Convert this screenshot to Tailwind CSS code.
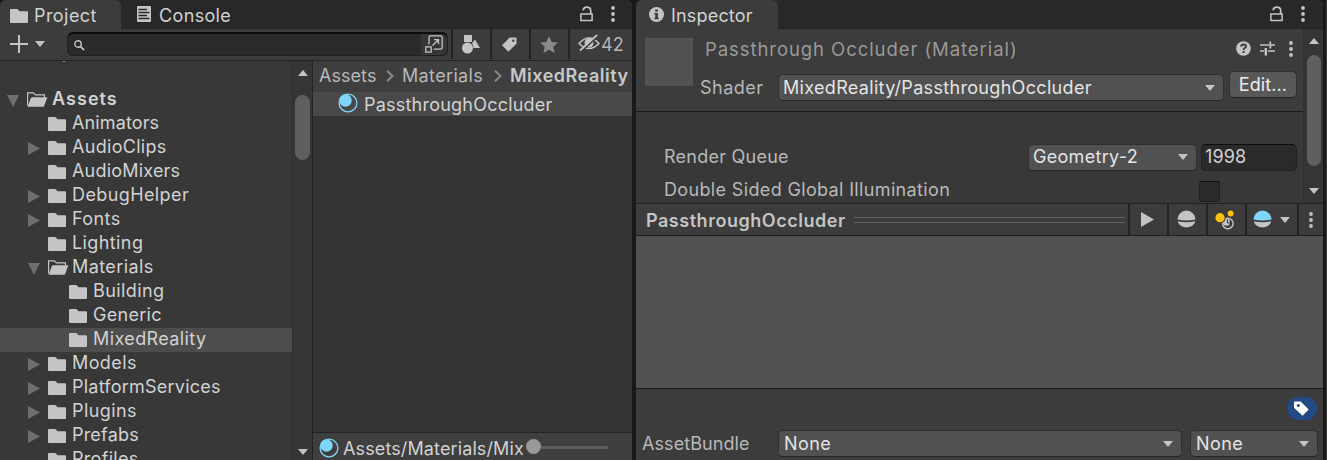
<!DOCTYPE html>
<html lang="en">
<head>
<meta charset="utf-8">
<title>Project and Inspector</title>
<script src="https://cdn.jsdelivr.net/npm/@tailwindcss/browser@4"></script>
</head>
<body class="w-[1327px] h-[460px] overflow-hidden bg-[#191919] font-['Inter',sans-serif] text-[18px] leading-6 tracking-[0.4px] text-[#d2d2d2]">
<svg class="hidden">
  <symbol id="folder" viewBox="0 0 18 14"><path d="M0 1Q0 0 1 0H7.5L9.5 2.2H17Q18 2.2 18 3.2V13Q18 14 17 14H1Q0 14 0 13Z" fill="#c4c4c4"/></symbol>
  <symbol id="open" viewBox="0 0 21 15"><path d="M.6 13.5V.9H6.3L8.4 2.9H17.4V5.5" fill="none" stroke="#c4c4c4" stroke-width="1.2"/><path d="M5.2 5.2H20.4L17 14.2Q16.700 14.700 16 14.700H.6L3.900 6Q4.200 5.200 5.200 5.200Z" fill="#c4c4c4"/></symbol>
  <symbol id="right" viewBox="0 0 12 13"><path d="M0 0L12 6.500L0 13Z" fill="#6e6e6e"/></symbol>
  <symbol id="down" viewBox="0 0 12 12"><path d="M0 0H12L6 12Z" fill="#6e6e6e"/></symbol>
  <symbol id="caret" viewBox="0 0 10 6"><path d="M0 0H10L5 6Z" fill="#c4c4c4"/></symbol>
  <symbol id="caretup" viewBox="0 0 10 6"><path d="M0 6H10L5 0Z" fill="#c4c4c4"/></symbol>
  <symbol id="lock" viewBox="0 0 13 16"><path d="M.9 8H12.1V14.500H.9Z" fill="none" stroke="#c4c4c4" stroke-width="1.500"/><path d="M3 4.300Q3.600 1.100 6.600 1.100Q10.700 1.100 10.700 4.500V8" fill="none" stroke="#c4c4c4" stroke-width="1.700"/></symbol>
  <symbol id="dots" viewBox="0 0 4 16"><g fill="#c4c4c4"><circle cx="2" cy="2" r="1.900"/><circle cx="2" cy="8" r="1.900"/><circle cx="2" cy="14" r="1.900"/></g></symbol>
  <symbol id="mat" viewBox="0 0 20 20"><circle cx="10" cy="10" r="8.900" fill="none" stroke="#7fd6fd" stroke-width="1.300"/><circle cx="7.500" cy="7.500" r="6.200" fill="#7fd6fd"/></symbol>
</svg>
<div class="flex h-[460px] w-[1327px]">

  <!-- Project panel -->
  <section class="flex h-full w-[632px] shrink-0 flex-col rounded-t-md bg-[#383838] overflow-hidden">
    <header class="flex h-[29px] shrink-0 bg-[#282828]">
      <div class="flex w-[121px] items-center rounded-t-md bg-[#3c3c3c] pl-[10px] pt-[2px]">
        <svg class="h-[14px] w-[18px]"><use href="#folder"/></svg>
        <span class="ml-[6px] tracking-[0.450px]">Project</span>
      </div>
      <div class="flex flex-1 items-center border-b border-[#232323] pl-4">
        <svg class="h-4 w-[14px]" viewBox="0 0 14 16"><rect width="14" height="16" rx="1" fill="#c4c4c4"/><path d="M1.500 3.500H10M1.500 6.500H12.500M1.500 9.500H10M1.500 12.500H12.500" stroke="#282828" stroke-width="1.300"/></svg>
        <span class="ml-2 mt-[3px] tracking-[0.350px]">Console</span>
        <svg class="ml-auto h-4 w-[13px]"><use href="#lock"/></svg>
        <svg class="ml-[18px] mr-[17px] h-4 w-1"><use href="#dots"/></svg>
      </div>
    </header>
    <div class="flex h-8 shrink-0 border-b border-[#232323] bg-[#3c3c3c]">
      <svg class="ml-[10px] mt-[6px] h-[18px] w-[18px]" viewBox="0 0 18 18"><path d="M9 0V18M0 9H18" stroke="#c4c4c4" stroke-width="2"/></svg>
      <svg class="ml-[7px] mt-3 h-[6px] w-[10px]"><use href="#caret"/></svg>
      <div class="ml-[22px] mt-[3px] flex h-6 w-[381px] rounded-md border border-t-2 border-[#212121] border-t-[#0d0d0d] bg-[#2a2a2a]">
        <svg class="ml-[6px] mt-[6px] h-[11px] w-[11px]" viewBox="0 0 11 11"><circle cx="4" cy="4" r="3.200" fill="none" stroke="#c4c4c4" stroke-width="1.400"/><path d="M6.300 6.300L10.200 10.200" stroke="#c4c4c4" stroke-width="1.700"/></svg>
        <div class="ml-auto flex w-[26px] justify-center rounded-r-md bg-[#363636] pt-px">
          <svg class="h-[18px] w-[18px]" viewBox="0 0 18 18" fill="none" stroke="#c4c4c4" stroke-width="1.300"><path d="M4 9.500V2.500Q4 .8 5.700 .8H15.500Q17.200 .8 17.200 2.500V12.500Q17.200 14.200 15.500 14.200H8.500M.8 11.800H6.200V17.200H.8ZM7.500 10.500L13.300 4.800M9 4.600H13.500V9.200"/></svg>
        </div>
      </div>
      <div class="ml-[3px] flex h-[30px] flex-1">
        <div class="flex w-[39px] items-center justify-center border-l-2 border-[#232323] pr-[2px]">
          <svg class="h-[19px] w-[18px]" viewBox="0 0 18 19" fill="#c4c4c4"><rect x="2" width="8" height="7"/><circle cx="5.500" cy="13" r="5.500"/><path d="M13 4.500L18 13H11.500Q11.300 9.500 9.800 8.300Z"/></svg>
        </div>
        <div class="flex w-[39px] items-center justify-center border-l-2 border-[#232323] pr-[2px]">
          <svg class="h-[15px] w-[15px]" viewBox="0 0 15 15"><path d="M7.700 .5H13.500Q14.500 .5 14.500 1.500V6.800L6.300 14.800L0 8.300Z" fill="#c4c4c4"/><circle cx="11.300" cy="3.800" r="1.200" fill="#3c3c3c"/></svg>
        </div>
        <div class="flex w-[39px] items-center justify-center border-l-2 border-[#232323] pr-[2px]">
          <svg class="h-[17px] w-[18px]" viewBox="0 0 18 17"><path d="M9 0L11.600 5.900L18 6.500L13.200 10.800L14.600 17L9 13.700L3.400 17L4.800 10.800L0 6.500L6.400 5.900Z" fill="#8a8a8a"/></svg>
        </div>
        <div class="flex flex-1 items-center border-l-2 border-[#232323] pl-2">
          <svg class="-mt-[2px] h-[18px] w-[22px] shrink-0" viewBox="0 0 22 18"><path d="M1 9.500Q11 -1.500 21 9.500Q11 19.500 1 9.500Z" fill="none" stroke="#c4c4c4" stroke-width="1.500"/><circle cx="11" cy="9" r="4.500" fill="#c4c4c4"/><path d="M3 17.500L20 2" stroke="#3c3c3c" stroke-width="2"/><path d="M2 16.500L19 1" stroke="#c4c4c4" stroke-width="1.700"/></svg>
          <span class="ml-px mt-px tracking-[0.100px] text-[#b4b4b4]">42</span>
        </div>
      </div>
    </div>

    <div class="flex min-h-0 flex-1">
      <!-- Folder tree -->
      <div class="w-[292px] shrink-0 overflow-hidden">
        <div class="h-[27px] pl-[63px]"><div class="h-px w-[2px] bg-[#8a8a8a]"></div></div>
        <div class="flex h-6 pl-[7px]"><svg class="mt-[7px] h-3 w-3"><use href="#down"/></svg><svg class="ml-2 mt-1 h-[15px] w-[21px]"><use href="#open"/></svg><b class="-mt-px ml-1 font-semibold tracking-[1.050px]">Assets</b></div>
        <div class="flex h-6 pl-[48px]"><svg class="mt-[5px] h-[14px] w-[18px]"><use href="#folder"/></svg><span class="-mt-px ml-[6px] tracking-[0.120px]">Animators</span></div>
        <div class="flex h-6 pl-[28px]"><svg class="mt-[6px] h-[13px] w-3"><use href="#right"/></svg><svg class="ml-2 mt-[5px] h-[14px] w-[18px]"><use href="#folder"/></svg><span class="-mt-px ml-[6px] tracking-[0.300px]">AudioClips</span></div>
        <div class="flex h-6 pl-[48px]"><svg class="mt-[5px] h-[14px] w-[18px]"><use href="#folder"/></svg><span class="-mt-px ml-[6px] tracking-[0.200px]">AudioMixers</span></div>
        <div class="flex h-6 pl-[28px]"><svg class="mt-[6px] h-[13px] w-3"><use href="#right"/></svg><svg class="ml-2 mt-[5px] h-[14px] w-[18px]"><use href="#folder"/></svg><span class="-mt-px ml-[6px]">DebugHelper</span></div>
        <div class="flex h-6 pl-[28px]"><svg class="mt-[6px] h-[13px] w-3"><use href="#right"/></svg><svg class="ml-2 mt-[5px] h-[14px] w-[18px]"><use href="#folder"/></svg><span class="-mt-px ml-[6px]">Fonts</span></div>
        <div class="flex h-6 pl-[48px]"><svg class="mt-[5px] h-[14px] w-[18px]"><use href="#folder"/></svg><span class="-mt-px ml-[6px]">Lighting</span></div>
        <div class="flex h-6 pl-[28px]"><svg class="mt-[7px] h-3 w-3"><use href="#down"/></svg><svg class="ml-2 mt-1 h-[15px] w-[21px]"><use href="#open"/></svg><span class="-mt-px ml-[3px]">Materials</span></div>
        <div class="flex h-6 pl-[69px]"><svg class="mt-[5px] h-[14px] w-[18px]"><use href="#folder"/></svg><span class="-mt-px ml-[6px]">Building</span></div>
        <div class="flex h-6 pl-[69px]"><svg class="mt-[5px] h-[14px] w-[18px]"><use href="#folder"/></svg><span class="-mt-px ml-[6px] tracking-[0.300px]">Generic</span></div>
        <div class="flex h-6 bg-[#4d4d4d] pl-[69px]"><svg class="mt-[5px] h-[14px] w-[18px]"><use href="#folder"/></svg><span class="-mt-px ml-[6px]">MixedReality</span></div>
        <div class="flex h-6 pl-[28px]"><svg class="mt-[6px] h-[13px] w-3"><use href="#right"/></svg><svg class="ml-2 mt-[5px] h-[14px] w-[18px]"><use href="#folder"/></svg><span class="-mt-px ml-[6px]">Models</span></div>
        <div class="flex h-6 pl-[28px]"><svg class="mt-[6px] h-[13px] w-3"><use href="#right"/></svg><svg class="ml-2 mt-[5px] h-[14px] w-[18px]"><use href="#folder"/></svg><span class="-mt-px ml-[6px] tracking-[0.230px]">PlatformServices</span></div>
        <div class="flex h-6 pl-[28px]"><svg class="mt-[6px] h-[13px] w-3"><use href="#right"/></svg><svg class="ml-2 mt-[5px] h-[14px] w-[18px]"><use href="#folder"/></svg><span class="-mt-px ml-[6px]">Plugins</span></div>
        <div class="flex h-6 pl-[28px]"><svg class="mt-[6px] h-[13px] w-3"><use href="#right"/></svg><svg class="ml-2 mt-[5px] h-[14px] w-[18px]"><use href="#folder"/></svg><span class="-mt-px ml-[6px] tracking-[0.200px]">Prefabs</span></div>
        <div class="flex h-6 pl-[48px]"><svg class="mt-[5px] h-[14px] w-[18px]"><use href="#folder"/></svg><span class="-mt-px ml-[6px] tracking-[0.300px]">Profiles</span></div>
      </div>
      <div class="flex w-[20px] shrink-0 flex-col items-center border-l border-[#303030] bg-[#353535]">
        <svg class="mt-[9px] h-[6px] w-[10px]"><use href="#caretup"/></svg>
        <div class="mt-[19px] h-[65px] w-[15px] rounded-full bg-[#5f5f5f]"></div>
        <svg class="mb-[5px] mt-auto h-[6px] w-[10px]"><use href="#caret"/></svg>
      </div>

      <!-- Folder contents -->
      <div class="flex flex-1 flex-col overflow-hidden border-l border-[#232323] bg-[#333333]">
        <div class="flex h-[31px] shrink-0 bg-[#3f3f3f] pl-[6px] pt-[3px] text-[#b8b8b8] whitespace-nowrap">
          <span class="w-[56px] tracking-[0.050px]">Assets</span>
          <svg class="ml-[11px] mr-2 mt-[6px] h-3 w-2 shrink-0" viewBox="0 0 8 12"><path d="M1 .8L6.500 6L1 11.200" fill="none" stroke="#8a8a8a" stroke-width="2"/></svg>
          <span class="w-[81px] tracking-[0.350px]">Materials</span>
          <svg class="ml-[11px] mr-[8px] mt-[6px] h-3 w-2 shrink-0" viewBox="0 0 8 12"><path d="M1 .8L6.500 6L1 11.200" fill="none" stroke="#8a8a8a" stroke-width="2"/></svg>
          <b class="font-semibold tracking-[0.500px] text-[#c8c8c8]">MixedReality</b>
        </div>
        <div class="flex h-6 shrink-0 bg-[#494949] pl-[25px]">
          <svg class="mt-px h-5 w-5"><use href="#mat"/></svg>
          <span class="ml-[6px] mt-px tracking-[0.220px]">PassthroughOccluder</span>
        </div>
        <div class="mt-auto flex h-7 shrink-0 items-center border-t border-[#232323] bg-[#3f3f3f] pl-[6px] pt-[3px]">
          <svg class="h-5 w-5 shrink-0"><use href="#mat"/></svg>
          <span class="ml-1 mt-px w-[183px] whitespace-nowrap tracking-[0.120px]">Assets/Materials/Mix</span>
          <div class="h-[15px] w-[15px] -mt-[3px] rounded-full bg-[#999999]"></div>
          <div class="h-[3px] w-[67px] -mt-[2px] bg-[#5e5e5e]"></div>
        </div>
      </div>
    </div>
  </section>

  <!-- Inspector panel -->
  <section class="ml-1 flex h-full w-[687px] shrink-0 flex-col overflow-hidden rounded-t-md bg-[#383838]">
    <header class="flex h-[29px] shrink-0 bg-[#282828]">
      <div class="flex w-[142px] items-center rounded-t-md bg-[#3c3c3c] pl-[13px]">
        <svg class="h-[15px] w-[15px]" viewBox="0 0 15 15"><circle cx="7.500" cy="7.500" r="7.500" fill="#c4c4c4"/><path d="M6.200 2.500H8.900V4.700H6.200ZM5.200 6H8.900V11H10V12.300H5.200V11H6.200V7.200H5.200Z" fill="#3c3c3c"/></svg>
        <span class="ml-[7px] mt-[3px] tracking-[0.180px]">Inspector</span>
      </div>
      <div class="flex flex-1 items-center border-b border-[#232323]">
        <svg class="ml-auto h-4 w-[13px]"><use href="#lock"/></svg>
        <svg class="ml-[18px] mr-[18px] h-4 w-1"><use href="#dots"/></svg>
      </div>
    </header>
    <div class="flex h-[174px] shrink-0">
      <div class="w-[667px] overflow-hidden">
        <div class="flex h-[83px] border-b border-[#1a1a1a] bg-[#3c3c3c]">
          <div class="ml-[9px] mt-[9px] h-12 w-12 shrink-0 bg-[#525252]"></div>
          <div class="flex-1">
            <div class="flex h-[41px] pl-3 pt-2">
              <span class="text-[18.500px] tracking-[0.930px] text-[#999999] whitespace-nowrap">Passthrough Occluder (Material)</span>
              <svg class="ml-auto mt-1 h-[15px] w-[15px] shrink-0" viewBox="0 0 15 15"><circle cx="7.500" cy="7.500" r="7.300" fill="#c4c4c4"/><path d="M5.100 5.600Q5.200 3.500 7.600 3.500Q10 3.500 10 5.400Q10 6.600 8.600 7.200Q7.600 7.700 7.600 9" fill="none" stroke="#3c3c3c" stroke-width="1.900"/><rect x="6.600" y="10" width="2" height="2" fill="#3c3c3c"/></svg>
              <svg class="ml-[9px] mt-1 h-[15px] w-[15px] shrink-0" viewBox="0 0 15 15" fill="none" stroke="#c4c4c4"><path d="M0 4H9M10 4H15M0 10H4M8 10H15" stroke-width="1.400"/><path d="M10.300 .5V7.500" stroke-width="1.800"/><path d="M5.800 7V14.500" stroke-width="2.400"/></svg>
              <svg class="ml-[14px] mr-[10px] mt-1 h-4 w-1 shrink-0"><use href="#dots"/></svg>
            </div>
            <div class="flex pl-[7px]">
              <span class="mt-[6px] w-[78px] tracking-[0.500px] text-[#b8b8b8]">Shader</span>
              <div class="mt-1 flex h-[27px] w-[446px] items-center rounded-[5px] border border-[#303030] border-b-[#242424] bg-[#515151] pl-1 pr-2 tracking-[0.320px] text-[#e4e4e4]">MixedReality/PassthroughOccluder<svg class="ml-auto h-[6px] w-[10px]"><use href="#caret"/></svg></div>
              <div class="ml-[5px] mt-px flex h-[27px] w-[68px] items-center justify-center rounded-[5px] border border-[#303030] border-b-[#242424] bg-[#585858] tracking-[0.100px] text-[#eeeeee]">Edit...</div>
            </div>
          </div>
        </div>
        <div class="flex h-[59px] items-end pl-7">
          <span class="mb-[2px] w-[364px] tracking-[0.250px] text-[#b8b8b8]">Render Queue</span>
          <div class="flex h-[27px] w-[169px] items-center rounded-[5px] border border-[#303030] border-b-[#242424] bg-[#515151] pl-1 pr-2 pb-px tracking-[0.300px] text-[#e4e4e4]">Geometry-2<svg class="ml-auto h-[6px] w-[10px]"><use href="#caret"/></svg></div>
          <div class="ml-1 flex h-[27px] w-24 items-center rounded-[5px] border border-[#212121] border-t-[#0d0d0d] bg-[#2a2a2a] pb-px pl-[3px] tracking-[0.100px]">1998</div>
        </div>
        <div class="flex pl-7">
          <span class="mt-[7px] w-[535px] tracking-[0.350px] text-[#b8b8b8]">Double Sided Global Illumination</span>
          <div class="mt-[10px] h-[21px] w-[21px] rounded-[3px] border border-[#212121] border-t-[#0d0d0d] bg-[#2a2a2a]"></div>
        </div>
      </div>
      <div class="flex w-5 shrink-0 flex-col items-center border-l border-[#303030] bg-[#353535]">
        <svg class="mt-[9px] h-[6px] w-[10px]"><use href="#caretup"/></svg>
        <div class="mt-[11px] h-[111px] w-[14px] rounded-full bg-[#5f5f5f]"></div>
        <svg class="mb-[9px] mt-auto h-[6px] w-[10px]"><use href="#caret"/></svg>
      </div>
    </div>
    <div class="flex h-[33px] shrink-0 items-center border-y border-[#1f1f1f] bg-[#3c3c3c]">
      <b class="ml-[10px] mt-[2px] w-[208px] font-semibold tracking-[0.530px] text-[#c4c4c4]">PassthroughOccluder</b>
      <div class="mr-[3px] h-[6px] flex-1 border-y border-[#606060]"></div>
      <div class="flex h-full w-[39px] items-center justify-center border-l-2 border-[#232323]"><svg class="-ml-[3px] h-[15px] w-[13px]" viewBox="0 0 13 15"><path d="M0 0L13 7.500L0 15Z" fill="#c4c4c4"/></svg></div>
      <div class="flex h-full w-[39px] items-center justify-center border-l-2 border-[#232323]"><svg class="-ml-[3px] h-[19px] w-[19px]" viewBox="0 0 19 19" fill="#c4c4c4"><path d="M.5 9.500A9 9 0 0 1 18.500 9.500Q9.500 11.500 .5 9.500ZM.7 11.200Q9.500 13.200 18.300 11.200A9 8 0 0 1 .7 11.200Z"/></svg></div>
      <div class="flex h-full w-[39px] items-center justify-center border-l-2 border-[#232323]"><svg class="-ml-[5px] h-5 w-[19px]" viewBox="0 0 19 20"><circle cx="12.800" cy="13.500" r="5.300" fill="none" stroke="#c4c4c4" stroke-width="1.400"/><circle cx="11.500" cy="12.300" r="3.500" fill="#c4c4c4"/><path d="M12.500 9.500V13H16.500" fill="none" stroke="#3c3c3c" stroke-width="1"/><circle cx="5" cy="7.700" r="5.600" fill="#3c3c3c"/><circle cx="15.600" cy="3.500" r="3.800" fill="#3c3c3c"/><circle cx="5" cy="7.700" r="4.600" fill="#ffc107"/><circle cx="15.600" cy="3.500" r="2.900" fill="#ffc107"/></svg></div>
      <div class="flex h-full w-[52px] items-center border-l-2 border-[#232323] pl-[6px]"><svg class="h-[19px] w-[19px]" viewBox="0 0 19 19"><path d="M.5 9.500A9 9 0 0 1 18.500 9.500Q9.500 11.500 .5 9.500Z" fill="#7fd6fd"/><path d="M.7 11.200Q9.500 13.200 18.300 11.200A9 8 0 0 1 .7 11.200Z" fill="#c4c4c4"/></svg><svg class="ml-2 h-[6px] w-[10px]"><use href="#caret"/></svg></div>
      <div class="flex h-full w-[26px] items-center justify-center border-l-2 border-[#232323]"><svg class="-ml-px h-4 w-1"><use href="#dots"/></svg></div>
    </div>
    <div class="h-[152px] shrink-0 bg-[#525252]"></div>
    <div class="flex-1 border-t border-[#191919] bg-[#3c3c3c]">
      <div class="flex h-[41px] justify-end pr-[6px] pt-2">
        <div class="flex h-[23px] w-[30px] items-center justify-center rounded-full bg-[#234a84]"><svg class="-ml-px h-[15px] w-[15px]" viewBox="0 0 15 15"><path d="M0 1.500Q0 .5 1 .5H6.700L14.600 8.600L8.600 14.700L0 6.800Z" fill="#ffffff"/><circle cx="4.300" cy="4.500" r="1.500" fill="#234a84"/></svg></div>
      </div>
      <div class="flex pl-[6px]">
        <span class="mt-[2px] w-[136px] tracking-[0.080px] text-[#b8b8b8]">AssetBundle</span>
        <div class="flex h-[27px] w-[404px] items-center rounded-[5px] border border-[#303030] border-b-[#242424] bg-[#515151] pl-[5px] pr-[8px] text-[#e4e4e4]">None<svg class="ml-auto h-[6px] w-[10px]"><use href="#caret"/></svg></div>
        <div class="ml-2 flex h-[27px] w-[128px] items-center rounded-[5px] border border-[#303030] border-b-[#242424] bg-[#515151] pl-[5px] pr-[8px] text-[#e4e4e4]">None<svg class="ml-auto h-[6px] w-[10px]"><use href="#caret"/></svg></div>
      </div>
    </div>
  </section>
  <div class="ml-[3px] w-px bg-[#3c3c3c]"></div>
</div>
</body>
</html>
